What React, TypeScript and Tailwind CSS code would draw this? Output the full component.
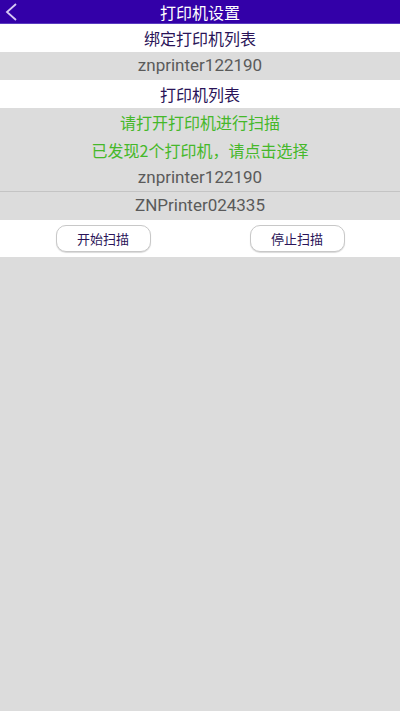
const cjk = { fontFamily: '"Noto Sans CJK SC", "Noto Sans", sans-serif' };
const latin = { fontFamily: 'Roboto, "Noto Sans CJK SC", sans-serif' };

function Row({ children, className }: { children: React.ReactNode; className: string }) {
  return <div className={`flex items-center justify-center ${className}`}>{children}</div>;
}

function Name({ children, className = '' }: { children: React.ReactNode; className?: string }) {
  return (
    <Row className={`h-[28px] text-[17px] text-[#5a5a5a] ${className}`}>
      <span style={latin}>{children}</span>
    </Row>
  );
}

export default function App() {
  return (
    <div className="w-[400px] h-[711px] bg-[#dcdcdc] flex flex-col" style={cjk}>
      <div className="relative h-[24px] bg-[#3300a8] border-b border-[#5a3cc0] flex items-center justify-center">
        <svg className="absolute left-[4px] top-[2px]" width="14" height="20" viewBox="0 0 14 20">
          <path d="M12 2 L3 10 L12 18" fill="none" stroke="#d6c8f4" strokeWidth="1.8" />
        </svg>
        <span className="text-white text-[16px] leading-none">打印机设置</span>
      </div>
      <Row className="h-[28px] bg-white text-[16px] text-[#2a1458]">绑定打印机列表</Row>
      <Name>znprinter122190</Name>
      <Row className="h-[28px] bg-white text-[16px] text-[#2a1458]">打印机列表</Row>
      <Row className="h-[28px] text-[16px] text-[#45b82a]">请打开打印机进行扫描</Row>
      <Row className="h-[28px] text-[16px] text-[#45b82a]">已发现2个打印机，请点击选择</Row>
      <Name className="h-[27px] border-b border-[#c4c4c4]">znprinter122190</Name>
      <Name>ZNPrinter024335</Name>
      <div className="h-[37px] bg-white flex items-center justify-around px-[6px]">
        <button className="w-[95px] h-[27px] rounded-[10px] border border-[#c8c8c8] bg-white text-[13px] text-[#2a1458] shadow-[0_1px_1px_rgba(0,0,0,0.15)]">
          开始扫描
        </button>
        <button className="w-[95px] h-[27px] rounded-[10px] border border-[#c8c8c8] bg-white text-[13px] text-[#2a1458] shadow-[0_1px_1px_rgba(0,0,0,0.15)]">
          停止扫描
        </button>
      </div>
    </div>
  );
}
